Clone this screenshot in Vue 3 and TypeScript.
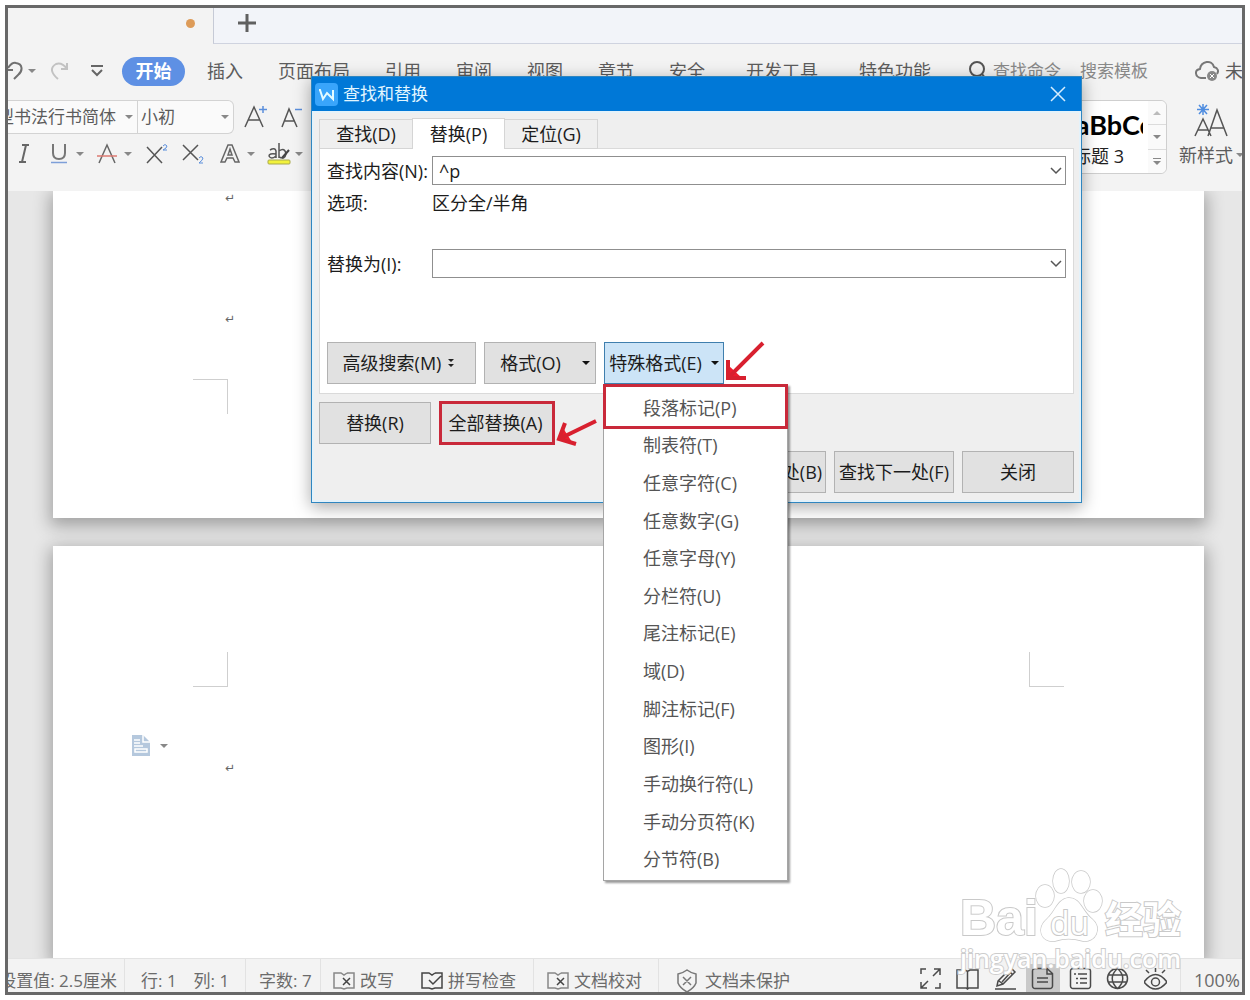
<script setup lang="ts">
import { ref } from 'vue'

interface StatusTool {
  name: string
  paths: string[]
}

const findText = ref('^p')
const replaceText = ref('')

const mainTabs: string[] = ['插入', '页面布局', '引用', '审阅', '视图', '章节', '安全']
const extraTabs: string[] = ['开发工具', '特色功能']

const specialFormats: string[] = [
  '段落标记(P)',
  '制表符(T)',
  '任意字符(C)',
  '任意数字(G)',
  '任意字母(Y)',
  '分栏符(U)',
  '尾注标记(E)',
  '域(D)',
  '脚注标记(F)',
  '图形(I)',
  '手动换行符(L)',
  '手动分页符(K)',
  '分节符(B)',
]

const viewTools: StatusTool[] = [
  { name: '全屏显示', paths: ['M2 7V2h5M15 2h6v6M21 2l-7 7M21 16v5h-5M8 21H2v-6M2 21l7-7'] },
  { name: '阅读版式', paths: ['M1 3h8l2.500 1.500L14 3h8v18h-9l-1.500 1-1.500-1H1zM11.500 4v18'] },
  { name: '写作模式', paths: ['M4 14L17 1l4 4L9 17l-6 2zM15 4l3 3M5 14l4 3M8 15l8-9M1 22h21'] },
  { name: '页面视图', paths: ['M4 1.500h12l5.500 5V19a2.500 2.500 0 0 1-2.500 2.500H4A2.500 2.500 0 0 1 1.500 19V4A2.500 2.500 0 0 1 4 1.500zM16 2v5h5M6 11h11M6 15h11'] },
  { name: '大纲', paths: ['M4 1.500h15A2.500 2.500 0 0 1 21.500 4v15a2.500 2.500 0 0 1-2.500 2.500H4A2.500 2.500 0 0 1 1.500 19V4A2.500 2.500 0 0 1 4 1.500zM5 7h2M9 7h9M7 11.500h2M11 11.500h7M7 16h2M11 16h7'] },
  { name: 'Web版式', paths: ['M11.500 1.500a10 10 0 1 0 0 20a10 10 0 1 0 0-20zM11.500 1.500c-7 6-7 14 0 20c7-6 7-14 0-20M2 8h19M2 15h19'] },
  { name: '护眼模式', paths: ['M0 15q11.500-15 23 0q-11.500 14-23 0zM11.500 11a4 4 0 1 0 0 8a4 4 0 1 0 0-8zM11.500 1v4M2 3l3 3M21 3l-3 3'] },
]
</script>

<template>
  <div class="frame">
    <header class="titlebar">
      <div class="doc-tab"><span class="unsaved"></span></div>
      <div class="tab-rest">
        <button class="plain" aria-label="新建">
          <svg width="18" height="18" viewBox="0 0 18 18"><path d="M9 0v18M0 9h18" stroke="#606060" stroke-width="3" fill="none" /></svg>
        </button>
      </div>
    </header>

    <nav class="menubar">
      <div class="quick">
        <button class="plain" aria-label="撤销">
          <svg width="15" height="20" viewBox="0 0 15 20"><path d="M0 9h5M0 7Q4 1 8 2c7 1 7 8 2 12l-4 4" stroke="#707070" stroke-width="2" fill="none" /></svg>
        </button>
        <span class="caret undo-caret"></span>
        <button class="plain redo" aria-label="恢复">
          <svg width="19" height="20" viewBox="0 0 19 20"><path d="M17 2v6h-6M17 8Q12 1 6 3C-1 7 2 13 8 18" stroke="#c2c2c2" stroke-width="2" fill="none" /></svg>
        </button>
        <button class="plain more" aria-label="更多">
          <svg width="12" height="12" viewBox="0 0 12 12"><path d="M0 1h12M1 5l5 5 5-5" stroke="#666" stroke-width="2" fill="none" /></svg>
        </button>
      </div>
      <button class="start">开始</button>
      <div class="tabs-main"><a v-for="t in mainTabs" :key="t" href="#">{{ t }}</a></div>
      <div class="tabs-extra"><a v-for="t in extraTabs" :key="t" href="#">{{ t }}</a></div>
      <svg class="search-icon" width="18" height="20" viewBox="0 0 18 20"><circle cx="8" cy="8" r="7" stroke="#555" stroke-width="2" fill="none" /><path d="M13 13l4 5" stroke="#555" stroke-width="2" /></svg>
      <span class="search-text">查找命令</span>
      <span class="search-text second">搜索模板</span>
      <div class="cloud">
        <svg width="24" height="22" viewBox="0 0 24 22">
          <path d="M11 18H6C0 17-1 10 5 9C6 1 17-1 19 7c4 1 5 4 3 7" stroke="#777" stroke-width="2" fill="none" />
          <circle cx="17" cy="16" r="5" fill="#888" /><path d="M15 14l4 4M19 14l-4 4" stroke="#fff" stroke-width="1" />
        </svg>
        <span>未</span>
      </div>
    </nav>

    <section class="ribbon">
      <div class="font-tools">
        <div class="font-row">
          <div class="combo family">
            <select aria-label="字体"><option>型书法行书简体</option></select>
            <span class="caret"></span>
          </div>
          <div class="combo size">
            <select aria-label="字号"><option>小初</option></select>
            <span class="caret"></span>
          </div>
          <button class="plain grow" aria-label="增大字号">
            <svg width="24" height="24" viewBox="0 0 24 24"><path d="M1 22L10 2l9 20M4 15h12" stroke="#555" stroke-width="1.500" fill="none" /><path d="M19 1v7M15 4.500h8" stroke="#5b8fdc" stroke-width="1.500" /></svg>
          </button>
          <button class="plain shrink" aria-label="减小字号">
            <svg width="24" height="24" viewBox="0 0 24 24"><path d="M2 22L9 4l8 18M5 16h10" stroke="#555" stroke-width="1.500" fill="none" /><path d="M15 4.500h7" stroke="#5b8fdc" stroke-width="1.500" /></svg>
          </button>
        </div>
        <div class="style-row">
          <button class="plain" aria-label="倾斜"><svg width="12" height="22" viewBox="0 0 12 22"><path d="M4 2h7M1 19h7M8 2L4 19" stroke="#666" stroke-width="2" fill="none" /></svg></button>
          <button class="plain underline" aria-label="下划线"><svg width="18" height="22" viewBox="0 0 18 22"><path d="M3 1v9q0 6 6 6t6-6V1" stroke="#777" stroke-width="2" fill="none" /><path d="M1 19.500h16" stroke="#7d9fd8" stroke-width="1.500" /></svg><span class="caret"></span></button>
          <button class="plain strike" aria-label="删除线"><svg width="20" height="22" viewBox="0 0 20 22"><path d="M2 20L10 2l8 18" stroke="#666" stroke-width="1.500" fill="none" /><path d="M0 13h20" stroke="#dc7a72" stroke-width="1.500" /></svg><span class="caret"></span></button>
          <button class="plain sup" aria-label="上标"><svg width="22" height="22" viewBox="0 0 22 22"><path d="M1 4l15 16M16 4L1 20" stroke="#555" stroke-width="1.500" fill="none" /><path d="M17 3q2-3 4 0q0 2-4 4h4" stroke="#5b8fdc" fill="none" /></svg></button>
          <button class="plain sub" aria-label="下标"><svg width="22" height="22" viewBox="0 0 22 22"><path d="M1 2l15 15M16 2L1 17" stroke="#555" stroke-width="1.500" fill="none" /><path d="M17 15q2-3 4 0q0 2-4 5h4" stroke="#5b8fdc" fill="none" /></svg></button>
          <button class="plain effect" aria-label="文字效果"><svg width="20" height="22" viewBox="0 0 20 22"><path d="M1 19L8 2h4l7 17h-4l-2-4H7l-2 4zM8 12h4l-2-6z" stroke="#666" stroke-width="1.500" fill="none" /></svg><span class="caret"></span></button>
          <button class="plain marker" aria-label="突出显示"><svg width="24" height="24" viewBox="0 0 24 24"><path d="M3 8q5-3 6 1v7M9 12q-7-1-7 2q2 4 7 0M12 1v15M12 9q6-4 7 3q-1 6-7 3" stroke="#555" stroke-width="1.500" fill="none" /><path d="M15 16l7-8" stroke="#444" stroke-width="2" /><rect x="1" y="18" width="22" height="4" rx="1" fill="#f2f23c" stroke="#a9a94c" /></svg><span class="caret"></span></button>
        </div>
      </div>
      <div class="gallery">
        <div class="preview"><strong>AaBbCc</strong><span>标题 3</span></div>
        <div class="scrolls">
          <button class="plain" aria-label="上一行"><span class="caret up"></span></button>
          <button class="plain" aria-label="下一行"><span class="caret"></span></button>
          <button class="plain expand" aria-label="展开"><span class="bar"></span><span class="caret"></span></button>
        </div>
      </div>
      <button class="plain new-style">
        <svg width="36" height="36" viewBox="0 0 36 36"><path d="M2 34l8-17 8 17M5 28h10M15 34L24 8l10 26M18 26h13" stroke="#555" stroke-width="1.500" fill="none" /><path d="M10 2v11M4 7.500h12M6 3l8 9M14 3l-8 9" stroke="#4f8de0" stroke-width="1.500" /></svg>
        <span class="new-label">新样式<span class="caret"></span></span>
      </button>
    </section>

    <main class="canvas">
      <article class="page first">
        <p class="mark-line"><span class="mark">↵</span></p>
        <p class="mark-line"><span class="mark">↵</span></p>
        <i class="corner top-right"></i>
      </article>
      <article class="page second-page">
        <div class="corners"><i class="corner bottom-right"></i><i class="corner bottom-left"></i></div>
        <button class="plain paste-tag" aria-label="页面选项">
          <svg width="18" height="21" viewBox="0 0 18 21"><path d="M0 0h11l7 7v14H0z" fill="#b5c8dd" /><path d="M11 0v7h7M2 5h6M2 8h6M2 11h9M3 14h12v3H3z" stroke="#fff" stroke-width="1.500" fill="none" /></svg>
          <span class="caret"></span>
        </button>
        <p class="mark-line"><span class="mark">↵</span></p>
      </article>
    </main>

    <footer class="status">
      <div class="cell indent"><span>设置值: 2.5厘米</span></div>
      <div class="cell position"><span>行: 1</span><span>列: 1</span></div>
      <div class="cell count">字数: 7</div>
      <div class="cell checks">
        <button class="plain"><svg width="22" height="20" viewBox="0 0 22 20"><path d="M14 2h7v15h-7l-3 1-3-1H1V2h7l3 2 3-2" stroke="#888" stroke-width="1.500" fill="none" /><path d="M10 7l7 7M17 7l-7 7" stroke="#444" stroke-width="1.500" /></svg>改写</button>
        <button class="plain"><svg width="22" height="20" viewBox="0 0 22 20"><path d="M14 2h7v15h-7l-3 1-3-1H1V2h7l3 2 3-2M8 9l4 4 8-8" stroke="#444" stroke-width="1.500" fill="none" /></svg>拼写检查</button>
      </div>
      <div class="cell proof">
        <button class="plain"><svg width="22" height="20" viewBox="0 0 22 20"><path d="M14 2h7v15h-7l-3 1-3-1H1V2h7l3 2 3-2" stroke="#888" stroke-width="1.500" fill="none" /><path d="M10 7l7 7M17 7l-7 7" stroke="#444" stroke-width="1.500" /></svg>文档校对</button>
      </div>
      <div class="cell protect">
        <button class="plain"><svg width="22" height="24" viewBox="0 0 22 24"><path d="M11 1q4 3 9 4v9q-2 5-9 9q-7-4-9-9V5q5-1 9-4zM7 8l8 8M15 8l-8 8" stroke="#777" stroke-width="1.500" fill="none" /></svg>文档未保护</button>
      </div>
      <div class="views">
        <button v-for="(tool, i) in viewTools" :key="tool.name" class="plain view" :class="{ active: i === 3 }" :aria-label="tool.name">
          <svg width="23" height="23" viewBox="0 0 23 23"><path v-for="p in tool.paths" :key="p" :d="p" stroke="#4a4a4a" stroke-width="1.500" fill="none" /></svg>
        </button>
      </div>
      <div class="zoom">100%</div>
    </footer>

    <section class="dialog" role="dialog" aria-labelledby="dialog-title">
      <div class="dialog-title">
        <svg width="23" height="23" viewBox="0 0 23 23"><rect width="23" height="23" rx="4" fill="#39a5fb" /><path d="M4 7h1l3 9 4-6 6 6V7" stroke="#e4fbff" stroke-width="2" fill="none" /></svg>
        <h1 id="dialog-title">查找和替换</h1>
        <button class="plain close" aria-label="关闭窗口"><svg width="16" height="16" viewBox="0 0 16 16"><path d="M1 1l14 14M15 1L1 15" stroke="#d6eeff" stroke-width="1.500" /></svg></button>
      </div>
      <div class="dialog-body">
        <div class="dialog-tabs">
          <button>查找(D)</button>
          <button class="current">替换(P)</button>
          <button>定位(G)</button>
        </div>
        <div class="panel">
          <div class="field">
            <label for="find">查找内容(N):</label>
            <div class="entry"><input id="find" v-model="findText" type="text" /><button class="plain" aria-label="查找历史"><svg width="12" height="8" viewBox="0 0 12 8"><path d="M1 1l5 5 5-5" stroke="#555" stroke-width="1.500" fill="none" /></svg></button></div>
          </div>
          <div class="field options"><span>选项:</span><span>区分全/半角</span></div>
          <div class="field replace-field">
            <label for="replace">替换为(I):</label>
            <div class="entry"><input id="replace" v-model="replaceText" type="text" /><button class="plain" aria-label="替换历史"><svg width="12" height="8" viewBox="0 0 12 8"><path d="M1 1l5 5 5-5" stroke="#555" stroke-width="1.500" fill="none" /></svg></button></div>
          </div>
          <div class="format-buttons">
            <button class="btn advanced">高级搜索(M)<svg width="6" height="9" viewBox="0 0 6 9"><path d="M0 0h6L3 3zM0 5h6L3 8z" fill="#222" /></svg></button>
            <button class="btn format">格式(O)<span class="caret"></span></button>
            <div class="special">
              <button class="btn special-btn" aria-haspopup="menu">特殊格式(E)<span class="caret"></span></button>
              <div class="popup" role="menu">
                <button v-for="f in specialFormats" :key="f" role="menuitem">{{ f }}</button>
                <span class="highlight"></span>
              </div>
              <svg class="arrow-special" width="42" height="42" viewBox="0 0 42 42"><path d="M4 24v13h14z" fill="#ee1c2e" /><path d="M39 2L4 37M4 19v18h18" stroke="#d8202f" stroke-width="4" fill="none" /></svg>
            </div>
          </div>
        </div>
        <div class="action-row">
          <button class="btn">替换(R)</button>
          <div class="all">
            <button class="btn ringed">全部替换(A)</button>
            <svg class="arrow-all" width="44" height="30" viewBox="0 0 44 30"><path d="M8 10L4 21l13 3z" fill="#ee1c2e" /><path d="M41 3L4 21M10 5L4 21l17 5" stroke="#d8202f" stroke-width="4" fill="none" /></svg>
          </div>
        </div>
        <div class="nav-row">
          <button class="btn wide">查找上一处(B)</button>
          <button class="btn wide">查找下一处(F)</button>
          <button class="btn">关闭</button>
        </div>
      </div>
    </section>

    <aside class="watermark">
      <div class="brand">
        <span class="bai">Bai</span>
        <span class="paw">
          <svg width="72" height="76" viewBox="0 0 72 76"><g fill="#fff" stroke="#c9c9c9" stroke-width="1.500"><ellipse cx="12" cy="28" rx="9" ry="11" /><ellipse cx="28" cy="13" rx="8" ry="12" /><ellipse cx="48" cy="14" rx="9" ry="11" /><ellipse cx="60" cy="33" rx="9" ry="11" /><path d="M35 30C47 29 49 43 59 51C70 60 62 75 50 73C39 70 32 70 22 73C8 75 3 60 14 51C22 44 25 31 35 30z" /></g></svg>
          <span class="du">du</span>
        </span>
        <span class="jingyan">经验</span>
      </div>
      <div class="url">jingyan.baidu.com</div>
    </aside>
  </div>
</template>

<style>
body {
  margin: 0;
  background: #fff;
}
</style>

<style scoped>
* {
  box-sizing: border-box;
}
.frame {
  position: relative;
  display: flex;
  flex-direction: column;
  height: calc(100vh - 10px);
  margin: 5px;
  border: 3px solid #686868;
  background: #f3f3f3;
  overflow: hidden;
  font-family: "Open Sans", "Noto Sans CJK SC", sans-serif;
  font-size: 18px;
  line-height: 24px;
  color: #5c5c5c;
}
button,
input,
select {
  font: inherit;
  color: inherit;
}
.plain {
  display: flex;
  align-items: center;
  padding: 0;
  border: 0;
  background: none;
}
svg {
  display: block;
  flex: none;
}
p {
  margin: 0;
}
.caret {
  flex: none;
  width: 0;
  height: 0;
  border: 4px solid transparent;
  border-top-color: #888;
  border-bottom: 0;
}
.caret.up {
  border: 4px solid transparent;
  border-bottom-color: #bbb;
  border-top: 0;
}

.titlebar {
  display: flex;
  flex: none;
  height: 36px;
}
.doc-tab {
  display: flex;
  align-items: center;
  justify-content: flex-end;
  width: 205px;
  padding: 0 18px 6px 0;
}
.unsaved {
  width: 9px;
  height: 9px;
  border-radius: 50%;
  background: #dd9b58;
}
.tab-rest {
  display: flex;
  align-items: center;
  flex: 1;
  padding: 0 24px 6px;
  border-left: 1px solid #c6cad6;
  border-bottom: 1px solid #cfd3df;
  background: #f2f4f9;
}

.menubar {
  display: flex;
  align-items: center;
  flex: none;
  height: 54px;
  white-space: nowrap;
}
.menubar a {
  color: inherit;
  text-decoration: none;
}
.quick {
  display: flex;
  align-items: center;
  width: 114px;
}
.undo-caret {
  margin-left: 5px;
}
.redo {
  margin-left: 14px;
}
.more {
  margin-left: 22px;
}
.start {
  width: 63px;
  height: 29px;
  padding: 0;
  border: 0;
  border-radius: 15px;
  background: #5e90e4;
  color: #fff;
  font-weight: 700;
  line-height: 28px;
}
.tabs-main {
  display: flex;
  gap: 35px;
  margin-left: 22px;
}
.tabs-extra {
  display: flex;
  gap: 41px;
  margin-left: 41px;
}
.search-icon {
  margin-left: 38px;
}
.search-text {
  margin-left: 6px;
  color: #888;
  font-size: 17px;
}
.search-text.second {
  margin-left: 19px;
}
.cloud {
  display: flex;
  align-items: center;
  gap: 6px;
  width: 47px;
  margin-left: auto;
  overflow: hidden;
}

.ribbon {
  display: flex;
  flex: none;
  height: 93px;
  padding-top: 2px;
}
.font-tools {
  flex: 1;
}
.font-row {
  display: flex;
  align-items: center;
}
.combo {
  display: flex;
  align-items: center;
  justify-content: flex-end;
  height: 34px;
  padding-right: 4px;
  border: 1px solid #d3d3d3;
  background: #fafafa;
  overflow: hidden;
}
.combo select {
  appearance: none;
  flex: none;
  padding: 0;
  border: 0;
  background: none;
  font-size: 17px;
}
.family {
  width: 130px;
  border-left: 0;
}
.family select {
  width: 119px;
  margin-right: 9px;
}
.size {
  width: 96px;
  border-left: 0;
  border-radius: 0 6px 6px 0;
}
.size select {
  width: 80px;
}
.grow {
  margin-left: 10px;
}
.shrink {
  margin-left: 12px;
}
.style-row {
  display: flex;
  align-items: center;
  height: 24px;
  margin-top: 8px;
  padding-left: 10px;
}
.underline {
  gap: 8px;
  margin-left: 20px;
}
.strike {
  gap: 7px;
  margin-left: 13px;
}
.sup {
  margin-left: 14px;
}
.sub {
  margin-left: 14px;
}
.effect {
  gap: 7px;
  margin-left: 16px;
}
.marker {
  gap: 4px;
  margin-left: 12px;
}
.gallery {
  display: flex;
  width: 120px;
  height: 74px;
  border: 1px solid #cfcfcf;
  border-radius: 6px;
  background: #fff;
}
.preview {
  display: flex;
  flex-direction: column;
  width: 100px;
  padding: 7px 5px 0 9px;
  overflow: hidden;
  white-space: nowrap;
  color: #222;
}
.preview strong {
  width: 86px;
  overflow: hidden;
  font-family: Lato, sans-serif;
  font-size: 27px;
  line-height: 34px;
  color: #000;
}
.preview span {
  padding-left: 16px;
  line-height: 28px;
}
.scrolls {
  flex: 1;
  display: flex;
  flex-direction: column;
}
.scrolls .plain {
  flex: 1;
  justify-content: center;
  background: #fafafa;
  border-bottom: 1px solid #dcdcdc;
}
.scrolls .plain:last-child {
  border-bottom: 0;
  border-radius: 0 0 6px 0;
}
.scrolls .plain:first-child {
  border-radius: 0 6px 0 0;
}
.scrolls .expand {
  flex-direction: column;
  gap: 2px;
}
.bar {
  width: 8px;
  height: 1px;
  background: #888;
}
.new-style {
  flex-direction: column;
  justify-content: flex-start;
  align-items: flex-start;
  width: 75px;
  padding: 2px 0 0 12px;
  white-space: nowrap;
}
.new-style svg {
  margin-left: 14px;
}
.new-label {
  display: flex;
  align-items: center;
  gap: 3px;
  height: 34px;
}

.canvas {
  display: flex;
  flex-direction: column;
  flex: 1;
  gap: 28px;
  min-height: 0;
  padding: 0 38px 0 45px;
  background: #e7e7e7;
  overflow: hidden;
}
.page {
  background: #fff;
  box-shadow: 0 5px 16px 3px rgba(0, 0, 0, 0.3);
}
.first {
  flex: none;
  height: 327px;
  padding-left: 140px;
}
.second-page {
  flex: 1;
  padding-top: 106px;
}
.mark-line {
  height: 121px;
  padding-left: 32px;
}
.mark {
  display: block;
  font-family: "DejaVu Sans", sans-serif;
  font-size: 12px;
  line-height: 14px;
  color: #666;
}
.first .corner {
  margin-top: -54px;
}
.corner {
  display: block;
  width: 35px;
  height: 35px;
  border: 0 solid #cfcfcf;
}
.top-right {
  border-width: 1px 1px 0 0;
}
.bottom-right {
  border-width: 0 1px 1px 0;
}
.bottom-left {
  border-width: 0 0 1px 1px;
}
.corners {
  display: flex;
  justify-content: space-between;
  padding: 0 140px;
}
.paste-tag {
  gap: 10px;
  margin: 48px 0 5px 79px;
}
.second-page .mark-line {
  padding-left: 172px;
}

.status {
  display: flex;
  flex: none;
  height: 34px;
  border-top: 1px solid #e3e3e3;
  font-size: 17px;
  color: #6b6b6b;
  white-space: nowrap;
}
.cell {
  display: flex;
  align-items: center;
  flex: none;
  padding-top: 10px;
  border-right: 1px solid #e2e2e2;
}
.cell .plain {
  gap: 5px;
}
.indent {
  justify-content: flex-end;
  width: 117px;
  padding-right: 7px;
  overflow: hidden;
}
.indent span {
  flex: none;
}
.position {
  gap: 17px;
  width: 121px;
  padding-left: 16px;
}
.count {
  width: 75px;
  padding-left: 13px;
}
.checks {
  gap: 27px;
  width: 213px;
  padding-left: 12px;
}
.proof {
  width: 125px;
  padding-left: 13px;
}
.protect {
  padding-left: 17px;
  border: 0;
}
.protect .plain {
  gap: 7px;
}
.views {
  display: flex;
  justify-content: space-between;
  width: 268px;
  margin-left: auto;
  padding: 5px 8px 0 0;
  border-right: 1px solid #e2e2e2;
}
.view {
  justify-content: center;
  width: 34px;
}
.view.active {
  background: #c9c9c9;
}
.zoom {
  width: 61px;
  padding: 10px 0 0 13px;
  font-size: 18px;
  line-height: 23px;
}

.dialog {
  position: absolute;
  top: 68px;
  left: 303px;
  right: 160px;
  border: 1px solid #2f86c0;
  background: #efefef;
  box-shadow: 0 4px 16px rgba(0, 0, 0, 0.35);
  color: #1c1c1c;
}
.dialog-title {
  display: flex;
  align-items: center;
  gap: 5px;
  height: 34px;
  padding: 0 15px 0 3px;
  background: #0078d7;
  color: #e2f6ff;
}
.dialog-title h1 {
  flex: 1;
  margin: 0;
  font-size: 17px;
  font-weight: 400;
}
.dialog-body {
  padding: 7px 7px 9px;
  box-shadow: inset 0 0 0 2px #e4f2fa;
}
.dialog-tabs {
  display: flex;
  align-items: flex-end;
}
.dialog-tabs button {
  width: 93px;
  height: 30px;
  padding: 0;
  border: 1px solid #d5d5d5;
  background: #efefef;
}
.dialog-tabs .current {
  position: relative;
  height: 31px;
  border-bottom: 0;
  background: #fff;
}
.dialog-tabs button:last-child {
  border-left: 0;
}
.dialog-tabs button:first-child {
  border-right: 0;
}
.panel {
  margin-top: -1px;
  padding: 7px 7px 9px;
  border: 1px solid #dadada;
  background: #fff;
}
.field {
  display: grid;
  grid-template-columns: 105px 1fr;
  align-items: center;
  white-space: nowrap;
}
.options {
  height: 36px;
}
.replace-field {
  margin-top: 28px;
}
.entry {
  display: flex;
  height: 29px;
  padding-right: 3px;
  border: 1px solid #8f8f8f;
  background: #fff;
}
.entry input {
  flex: 1;
  min-width: 0;
  padding: 0 6px;
  border: 0;
  outline: 0;
  background: none;
}
.format-buttons {
  display: flex;
  gap: 8px;
  margin-top: 64px;
}
.btn {
  display: flex;
  align-items: center;
  justify-content: center;
  width: 112px;
  height: 42px;
  padding: 0;
  border: 1px solid #b2b2b2;
  background: #e1e1e1;
  white-space: nowrap;
}
.btn .caret {
  border-top-color: #111;
}
.advanced {
  gap: 7px;
  width: 149px;
  padding-right: 6px;
}
.format {
  gap: 21px;
  padding-left: 10px;
}
.special {
  position: relative;
}
.special-btn {
  gap: 9px;
  width: 120px;
  border-color: #3f7fae;
  background: #cce4f7;
}
.popup {
  position: absolute;
  z-index: 3;
  top: 42px;
  left: -1px;
  display: flex;
  flex-direction: column;
  width: 185px;
  height: 497px;
  padding: 4px 0 2px;
  border: 1px solid #a5a5a5;
  background: #fff;
  box-shadow: 2px 2px 2px rgba(0, 0, 0, 0.4);
}
.popup button {
  flex: 1;
  padding: 0 0 0 39px;
  border: 0;
  background: none;
  text-align: left;
  color: #555;
}
.highlight {
  position: absolute;
  top: -1px;
  left: -1px;
  right: -1px;
  height: 45px;
  border: 3px solid #c9293a;
  pointer-events: none;
}
.arrow-special {
  position: absolute;
  z-index: 4;
  top: -1px;
  left: 120px;
}
.action-row {
  display: flex;
  gap: 9px;
  margin-top: 8px;
}
.all {
  position: relative;
}
.ringed {
  width: 114px;
  padding-right: 3px;
  border: 0;
  outline: 3px solid #c9293a;
  outline-offset: -2px;
}
.arrow-all {
  position: absolute;
  top: 16px;
  left: 115px;
}
.nav-row {
  display: flex;
  justify-content: flex-end;
  gap: 8px;
  margin-top: 7px;
}
.wide {
  width: 120px;
}

.watermark {
  position: absolute;
  right: 58px;
  bottom: 20px;
  width: 224px;
  color: #fff;
  pointer-events: none;
}
.brand {
  display: flex;
  align-items: flex-end;
  height: 76px;
  font-weight: 700;
  -webkit-text-stroke: 2px #c9c9c9;
  paint-order: stroke fill;
  white-space: nowrap;
}
.bai {
  width: 73px;
  font-family: "Liberation Sans", sans-serif;
  font-size: 50px;
  line-height: 52px;
}
.paw {
  position: relative;
  width: 72px;
}
.du {
  position: absolute;
  top: 37px;
  left: 17px;
  font-size: 32px;
  line-height: 36px;
  font-weight: 400;
}
.jingyan {
  font-size: 38px;
  line-height: 52px;
}
.url {
  font-size: 25px;
  font-weight: 600;
  line-height: 28px;
  -webkit-text-stroke: 2px #cdcdcd;
  paint-order: stroke fill;
}
</style>
